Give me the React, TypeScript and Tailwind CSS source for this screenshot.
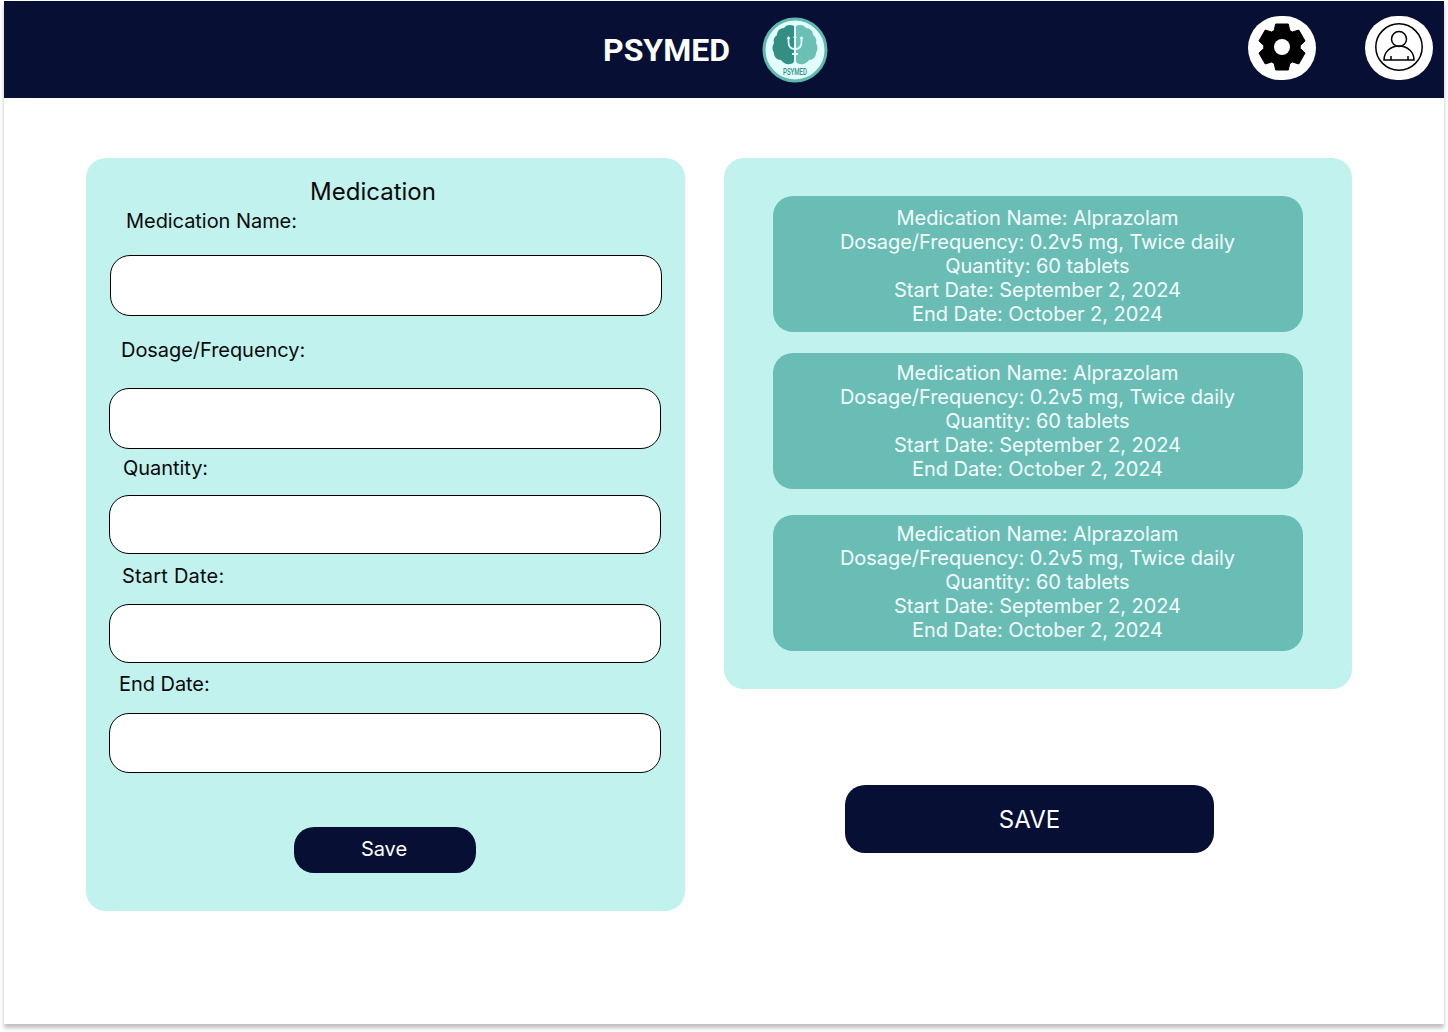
const NAVY_CARDS = [
  { id: 1, className: 'pt-[10px]' },
  { id: 2, className: 'mt-[21px] pt-[8px]' },
  { id: 3, className: 'mt-[26px] pt-[7px]' },
]

function gearPath() {
  const pts: string[] = []
  for (let k = 0; k < 6; k++) {
    const a = ((-90 + 60 * k) * Math.PI) / 180
    const cos = Math.cos(a)
    const sin = Math.sin(a)
    const at = (r: number, w: number) =>
      `${(24 + r * cos - w * sin).toFixed(2)} ${(24 + r * sin + w * cos).toFixed(2)}`
    pts.push(at(16.5, -7.8), at(23, -6.3), at(23, 6.3), at(16.5, 7.8))
  }
  return `M${pts.join('L')}Z`
}

function GearIcon() {
  return (
    <svg width="48" height="48" viewBox="0 0 48 48">
      <path d={gearPath()} fill="#000" stroke="#000" strokeWidth="1" strokeLinejoin="round" />
      <circle cx="24" cy="24" r="8" fill="#fff" />
    </svg>
  )
}

function Logo() {
  return (
    <svg width="66" height="66" viewBox="0 0 66 66" className="block">
      <circle cx="33" cy="33" r="31" fill="#E2FDFB" stroke="#5FB9AE" strokeWidth="3" />
      <path
        d="M32 9c-4-2-8-1-10 2-4 0-7 3-7 7-3 2-4 5-3 8-2 3-2 7 0 10 0 4 3 7 7 7 2 3 6 5 9 4 2 0 4-1 4-3z"
        fill="#338F83"
      />
      <path
        d="M34 9c4-2 8-1 10 2 4 0 7 3 7 7 3 2 4 5 3 8 2 3 2 7 0 10 0 4-3 7-7 7-2 3-6 5-9 4-2 0-4-1-4-3z"
        fill="#6BC0B5"
      />
      <path
        d="M26.500 20v5c0 5 3 7 6.500 7s6.500-2 6.500-7v-5M33 19v25M30 37h6"
        fill="none"
        stroke="#E2FDFB"
        strokeWidth="1.8"
      />
      <path d="M24.500 22l2-3 2 3zM37.500 22l2-3 2 3zM31 21l2-3 2 3z" fill="#E2FDFB" />
      <text
        x="33"
        y="57.500"
        textAnchor="middle"
        fontSize="9"
        fontWeight="500"
        fill="#338F83"
        fontFamily="Roboto, sans-serif"
        textLength="24"
        lengthAdjust="spacingAndGlyphs"
      >
        PSYMED
      </text>
    </svg>
  )
}

function ProfileIcon() {
  return (
    <svg width="48" height="48" viewBox="0 0 48 48" fill="none" stroke="#000" strokeWidth="1.5">
      <circle cx="24" cy="24" r="23.2" />
      <circle cx="24" cy="16" r="7.500" />
      <path d="M9 37c0-8 6.500-14 15-14s15 6 15 14z" />
      <path d="M16 37v-4M33 37v-4" />
    </svg>
  )
}

function Field({
  label,
  labelClass,
  inputClass,
}: {
  label: string
  labelClass: string
  inputClass: string
}) {
  return (
    <>
      <label className={`block text-[20px] leading-[24px] tracking-[-0.05px] text-[#0a0a0a] ${labelClass}`}>
        {label}
      </label>
      <div className={`bg-white border border-black rounded-[20px] ${inputClass}`} />
    </>
  )
}

function MedCard({ className }: { className: string }) {
  return (
    <div
      className={`w-[530px] h-[136px] pr-[1px] rounded-[20px] bg-[#69BDB5] text-center text-[20px] leading-[24px] tracking-[-0.05px] text-[#f4fffd] ${className}`}
    >
      <p>Medication Name: Alprazolam</p>
      <p>Dosage/Frequency: 0.2v5 mg, Twice daily</p>
      <p>Quantity: 60 tablets</p>
      <p>Start Date: September 2, 2024</p>
      <p>End Date: October 2, 2024</p>
    </div>
  )
}

export default function App() {
  return (
    <div className="w-[1448px] h-[1032px] bg-white overflow-hidden pt-px pl-1 font-['Inter',sans-serif]">
      <div className="w-[1440px] h-[1023px] bg-white shadow-[0_4px_4px_rgba(0,0,0,0.25)]">
        {/* Header */}
        <header className="h-[97px] bg-[#071034] flex items-center">
          <div className="flex items-center ml-[599px]">
            <span className="font-['Roboto',sans-serif] font-bold text-[32px] leading-none text-white">
              PSYMED
            </span>
            <div className="ml-[32px]">
              <Logo />
            </div>
          </div>
          <div className="ml-auto flex items-center gap-[49px] mr-[11px] -mt-[4px]">
            <div className="w-[68px] h-[64px] pb-[2px] rounded-full bg-white flex items-center justify-center">
              <GearIcon />
            </div>
            <div className="w-[68px] h-[64px] pb-[2px] rounded-full bg-white flex items-center justify-center">
              <ProfileIcon />
            </div>
          </div>
        </header>

        <main className="flex items-start pl-[82px] pt-[60px]">
          {/* Form */}
          <section className="w-[599px] h-[753px] rounded-[20px] bg-[#C1F2EE] pt-[19px]">
            <h2 className="w-[574px] text-center text-[24px] leading-[29px] text-[#0a0a0a]">Medication</h2>
            <Field
              label="Medication Name:"
              labelClass="ml-[40px] mt-[3px]"
              inputClass="ml-[24px] mt-[22px] w-[552px] h-[61px]"
            />
            <Field
              label="Dosage/Frequency:"
              labelClass="ml-[35px] mt-[22px]"
              inputClass="ml-[23px] mt-[26px] w-[552px] h-[61px]"
            />
            <Field
              label="Quantity:"
              labelClass="ml-[37px] mt-[7px]"
              inputClass="ml-[23px] mt-[15px] w-[552px] h-[59px]"
            />
            <Field
              label="Start Date:"
              labelClass="ml-[36px] mt-[10px] tracking-[0.2px]"
              inputClass="ml-[23px] mt-[16px] w-[552px] h-[59px]"
            />
            <Field
              label="End Date:"
              labelClass="ml-[33px] mt-[9px]"
              inputClass="ml-[23px] mt-[17px] w-[552px] h-[60px]"
            />
            <button className="block ml-[208px] mt-[54px] w-[182px] h-[46px] pb-[2px] pr-[2px] rounded-[20px] bg-[#071034] text-white text-[20px] tracking-[-0.05px]">
              Save
            </button>
          </section>

          {/* Saved medications */}
          <div className="ml-[39px] w-[628px]">
            <section className="h-[531px] rounded-[20px] bg-[#C1F2EE] pt-[38px] pl-[49px]">
              {NAVY_CARDS.map((card) => (
                <MedCard key={card.id} className={card.className} />
              ))}
            </section>
            <button className="block ml-[121px] mt-[96px] w-[369px] h-[68px] pt-[2px] rounded-[20px] bg-[#071034] text-white text-[24px]">
              SAVE
            </button>
          </div>
        </main>
      </div>
    </div>
  )
}
